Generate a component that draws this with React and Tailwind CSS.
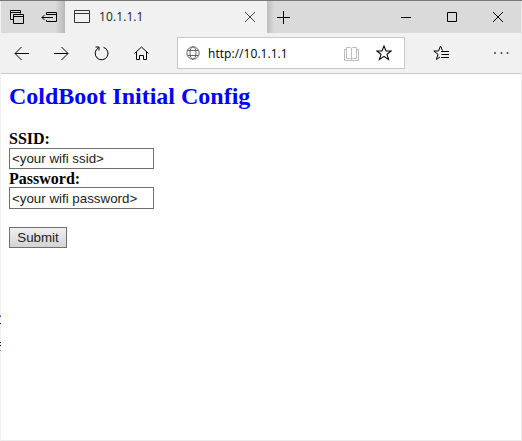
import React from "react";

const seg = "font-['Open_Sans','Noto_Sans',sans-serif]";

function Icon({ w = 18, h = 18, className = "", children, sw = 1 }) {
  return (
    <svg width={w} height={h} viewBox={`0 0 ${w} ${h}`} fill="none" stroke="currentColor" strokeWidth={sw} className={"block shrink-0 " + className}>
      {children}
    </svg>
  );
}

function TitleBar() {
  return (
    <div className="flex h-8 bg-[#dadada] text-black">
      <div className="flex w-16 shrink-0 items-start bg-linear-to-r from-[#dadada] from-85% to-[#b8b8b8] pl-[9px] pt-[9px]">
        <Icon w={14} h={14}>
          <path d="M3.500 9.500H.5V.5h10v3M.5 2.500h10" />
          <path d="M3.500 4.500h10v9h-10zM3.500 6.500h10" />
        </Icon>
        <Icon w={17} h={14} className="ml-[17px]">
          <path d="M5.500 5V2.500h10v9h-10V10M5.500 4.500h10" />
          <path d="M12 7.500H1M3.500 5l-2.500 2.500L3.500 10" />
        </Icon>
      </div>
      <div className="flex w-[202px] shrink-0 items-start bg-[#f1f1f1] pl-[9px]">
        <Icon w={16} h={13} className="mt-[9px] text-[#333]">
          <path d="M.5.5h15v12H.5zM.5 3.500h15" />
        </Icon>
        <span className={seg + " ml-[9px] mt-[7px] text-[12px] leading-[17px] tracking-[0.1px] text-[#222]"}>10.1.1.1</span>
        <Icon w={10} h={10} className="ml-auto mr-[12px] mt-[11px] text-[#444]">
          <path d="M0 0l10 10M10 0L0 10" />
        </Icon>
      </div>
      <div className="flex flex-1 items-start bg-linear-to-r from-[#bcbcbc] to-[#dadada] to-3% pl-[10px]">
        <Icon w={13} h={13} className="mt-[10px]">
          <path d="M6.500 0v13M0 6.500h13" />
        </Icon>
        <Icon w={11} h={11} className="ml-[111px] mt-[11px]">
          <path d="M0 5.500h10" />
        </Icon>
        <Icon w={10} h={10} className="ml-[35px] mt-[11px]">
          <path d="M.5.5h9v9h-9z" />
        </Icon>
        <Icon w={10} h={10} className="ml-[36px] mt-[11px]">
          <path d="M0 0l10 10M10 0L0 10" />
        </Icon>
      </div>
    </div>
  );
}

function Toolbar() {
  return (
    <div className="flex h-[41px] items-center border-b border-[#c8c8c8] bg-[#f1f1f1] pl-[13px] text-black">
      <Icon w={15} h={15}><path d="M15 7.500H1M7.500 1L1 7.500 7.500 14" /></Icon>
      <Icon w={15} h={15} className="ml-[25px]"><path d="M0 7.500h14M7.500 1L14 7.500 7.500 14" /></Icon>
      <Icon w={15} h={15} className="ml-[25px]">
        <path d="M9.500 1.300A6.400 6.400 0 1 1 4.500 1.800M1.500 1h3.500v3.500" />
      </Icon>
      <Icon w={15} h={15} className="ml-[25px]">
        <path d="M.5 7.500l7-6.500 7 6.500M2.500 6v7.500h3v-4h4v4h3V6" />
      </Icon>
      <div className="ml-[28px] flex h-8 w-[228px] items-center border border-[#c8c8c8] bg-white pl-2">
        <Icon w={14} h={14} className="text-[#666]">
          <circle cx="7" cy="7" r="6.200" />
          <ellipse cx="7" cy="7" rx="3" ry="6.200" />
          <path d="M1.500 4.500h11M1.500 9.500h11" />
        </Icon>
        <span className={seg + " ml-2 text-[12px] leading-[17px] tracking-[0.05px] text-black"}>http://10.1.1.1</span>
        <Icon w={15} h={14} className="ml-auto mt-px text-[#bdbdbd]">
          <path d="M2.500.5h4l1 1 1-1h4v11h-4l-1 1-1-1h-4zM7.500 1v11M2.500 2.500h-2v11h14v-11h-2" />
        </Icon>
        <Icon w={16} h={16} className="ml-[17px] mr-3" sw={1.05}>
          <path d="M8 1l2 5h5.200l-4.200 3.300 1.600 5.200L8 11.300l-4.600 3.200L5 9.300.8 6H6z" />
        </Icon>
      </div>
      <Icon w={16} h={16} className="ml-7">
        <path d="M9.500 5.500L7.500 1l-2 5H.8L5 9.300l-1.600 5.200L7 12" />
        <path d="M8 6.500h8M8.500 9.500H16M8 12.500h8" />
      </Icon>
      <Icon w={15} h={3} className="ml-[45px] text-[#222]" sw={1.6}>
        <path d="M.2 1h1.600M6.700 1h1.600M12.700 1h1.600" />
      </Icon>
    </div>
  );
}

function ConfigForm() {
  return (
    <form className="flex flex-col items-start pl-2 pt-2 font-['Liberation_Serif','Times_New_Roman',serif] text-[16px] font-bold text-black">
      <h2 className="text-[24px] font-bold leading-[28px] text-[#0000ff]">ColdBoot Initial Config</h2>
      <label className="mt-[20px] h-[18px] leading-[18px]">SSID:</label>
      <input readOnly value="<your wifi ssid>" className="h-[21px] w-[145px] border border-[#707070] bg-white px-0.5 font-['Liberation_Sans',Arial,sans-serif] text-[13.333px] font-normal text-[#222] outline-none" />
      <label className="h-[18px] pt-px leading-[18px]">Password:</label>
      <input readOnly value="<your wifi password>" className="h-[22px] w-[145px] border border-[#707070] bg-white px-0.5 font-['Liberation_Sans',Arial,sans-serif] text-[13.333px] font-normal text-[#222] outline-none" />
      <button type="button" className="mt-[18px] h-[21px] w-[58px] border border-[#707070] bg-linear-to-b from-[#efefef] to-[#d4d4d4] font-['Liberation_Sans',Arial,sans-serif] text-[13.333px] font-normal leading-[18px] text-[#222]">Submit</button>
    </form>
  );
}

export default function App() {
  return (
    <div className="flex h-[441px] w-[522px] flex-col overflow-hidden bg-white">
      <div className="h-px shrink-0 bg-[#777]" />
      <div className="flex flex-1">
        <div className="w-px shrink-0 bg-[#f0f0f0] pt-[314px]">
          <div className="h-px bg-[#d99a40]" />
          <div className="h-px bg-[#3a5a90]" />
          <div className="mt-1.5 h-px bg-[#101050]" />
          <div className="mt-[18px] h-px bg-[#300010]" />
          <div className="mt-0.5 h-px bg-[#300010]" />
          <div className="mt-1 h-px bg-[#807080]" />
        </div>
        <main className="flex-1 border-b border-r border-[#ececec] bg-white">
          <TitleBar />
          <Toolbar />
          <ConfigForm />
        </main>
      </div>
    </div>
  );
}
